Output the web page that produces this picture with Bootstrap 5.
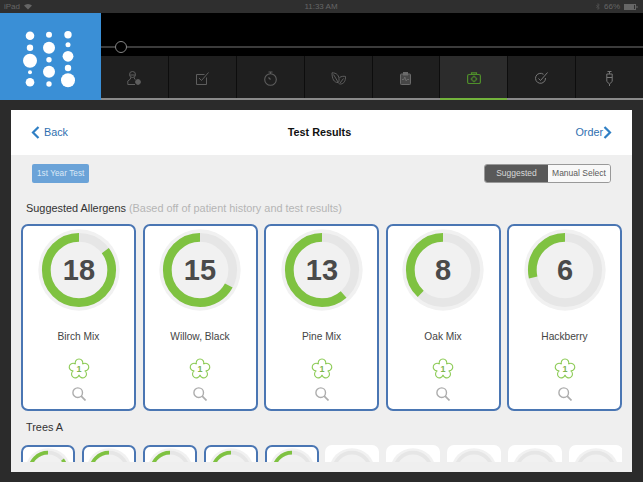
<!doctype html>
<html lang="en">
<head>
<meta charset="utf-8">
<title>Test Results</title>
<link href="https://cdn.jsdelivr.net/npm/bootstrap@5.3.0/dist/css/bootstrap.min.css" rel="stylesheet">
<style>
html,body{height:482px;overflow:hidden;background:#2b2b2b;font-family:"Liberation Sans",Arial,sans-serif}
.status-bar{height:13px;background:#2f2f2f;color:#666;font-size:8px;line-height:13px;padding:0 5px 0 4px}
.status-bar svg{display:block}
.status-side{flex:1}
.top-band{height:87px}
.logo-box{width:101px;background:#3a8fd6}
.logo-box svg{display:block}
.top-main{flex:1;background:#000}
.track-zone{height:43px;padding-top:33px}
.track-line{height:2px;background:#3b3b3b;position:relative}
.track-knob{position:absolute;left:14px;top:-5px;width:12px;height:12px;border-radius:50%;border:1.5px solid #858585;background:#000}
.tab-row{height:44px;background:#0d0d0d;border-bottom:2px solid #8a8a8a}
.tab-cell{flex:1;background:#1f1f1f;margin-left:1px;display:flex;align-items:center;justify-content:center;padding-top:2px}
.tab-cell:first-child{margin-left:0}
.tab-on{background:#2c2c2c;position:relative}
.tab-on::after{content:"";position:absolute;left:0;right:0;bottom:-2px;height:2px;background:#73b33c}
.outer-wrap{padding:10px 11px 0 11px;height:382px;background:#2b2b2b}
.sheet{height:362px;background:#efefef;overflow:hidden}
.sheet-head{height:45px;background:#fff;padding:0 20px}
.sheet-link{color:#2f6fb0;font-size:10.8px;text-decoration:none;width:60px}
.sheet-title{font-weight:700;font-size:10.8px;color:#111}
.sheet-body{padding:9px 10px 0 10px}
.year-pill{margin-left:11px;background:#6ba3d8;color:#dbe9f6;font-size:8.2px;border-radius:2px;height:19px;line-height:19px;padding:0 5px;width:57px;white-space:nowrap;letter-spacing:.05px}
.seg-group{margin-right:11px;height:19px;font-size:8.5px;border:1px solid #999;border-radius:3px;overflow:hidden;line-height:17px}
.seg-on{background:#595959;color:#d8d8d8;width:63px;text-align:center}
.seg-off{background:#f8f8f8;color:#5a5a5a;width:62px;text-align:center}
.section-label{font-size:10.9px;color:#333;margin:19px 0 0 5px;line-height:13px}
.section-label span{color:#b5b5b5}
.big-row{display:flex;gap:6.5px;margin-top:9px}
.big-card{width:115.4px;height:187px;background:#fff;border:2px solid #4a76b3;border-radius:7px;display:flex;flex-direction:column;align-items:center;padding-top:3px}
.big-card svg{display:block}
.gauge-num{font-size:29px;font-weight:700;fill:#4a4a4a;text-anchor:middle;font-family:"Liberation Sans",Arial,sans-serif}
.big-name{font-size:10.2px;color:#444;margin-top:19px;line-height:13px;height:13px}
.flower-wrap{margin-top:15px}
.lens-wrap{margin-top:7px}
.trees-label{font-size:10.9px;color:#333;margin:10px 0 0 5px;line-height:13px}
.mini-clip{height:17px;overflow:hidden;margin-top:11px}
.mini-row{display:flex;gap:6.9px}
.mini-card{width:54px;height:60px;background:#fff;border:2px solid #4a76b3;border-radius:7px;display:flex;justify-content:center;padding-top:1px;flex:none}
.mini-off{border-color:#fff}
</style>
</head>
<body>
<div class="status-bar d-flex justify-content-between align-items-center">
  <div class="status-side d-flex align-items-center gap-1">iPad
    <svg width="8" height="7" viewBox="0 0 9 7"><path d="M4.500 7 0 2.500a6.400 6.400 0 0 1 9 0z" fill="#666"/></svg>
  </div>
  <div>11:33 AM</div>
  <div class="status-side d-flex align-items-center justify-content-end gap-1">
    <svg width="4" height="7" viewBox="0 0 4 7" fill="none" stroke="#555" stroke-width=".7"><path d="M.3 2l3 3L2 6.500V.5L3.300 2l-3 3"/></svg>
    <span>66%</span>
    <svg width="14" height="6" viewBox="0 0 14 6"><rect x=".5" y=".5" width="11" height="5" fill="none" stroke="#666"/><rect x="1" y="1" width="9" height="4" fill="#666"/><rect x="12.500" y="2" width="1" height="2" fill="#666"/></svg>
  </div>
</div>
<div class="top-band d-flex">
  <div class="logo-box">
    <svg width="101" height="87" viewBox="0 13 101 87" fill="#fff">
      <circle cx="30" cy="35.7" r="4.3"/><circle cx="30" cy="47.7" r="3.2"/><circle cx="30" cy="60.7" r="7"/><circle cx="30" cy="72.3" r="2"/><circle cx="30" cy="82.3" r="4.3"/>
      <circle cx="49" cy="34.7" r="3"/><circle cx="49" cy="47.7" r="6"/><circle cx="49" cy="59.7" r="2.7"/><circle cx="49" cy="71.7" r="6"/><circle cx="49" cy="84" r="2.7"/>
      <circle cx="68" cy="34.7" r="3.7"/><circle cx="68" cy="44.7" r="2.5"/><circle cx="68" cy="56.3" r="5.4"/><circle cx="68" cy="68" r="3.2"/><circle cx="68" cy="80.3" r="7"/>
    </svg>
  </div>
  <div class="top-main">
    <div class="track-zone"><div class="track-line"><div class="track-knob"></div></div></div>
    <div class="tab-row d-flex">
      <div class="tab-cell"><svg width="14" height="14" viewBox="0 0 14 14" fill="none" stroke="#5e5e5e"><circle cx="5.500" cy="3.500" r="3"/><path d="M2.500 4h6M3.500 6.500v1.500L.8 10v3.500h7.200M7.500 6.500V8l1 .7"/><circle cx="11" cy="11" r="2.400" fill="#5e5e5e"/></svg></div>
      <div class="tab-cell"><svg width="13" height="13" viewBox="0 0 13 13" fill="none" stroke="#5e5e5e"><path d="M10.500 5.500v7h-10v-10h8"/><path d="M3 6l2.500 2.500L12.500.5"/></svg></div>
      <div class="tab-cell"><svg width="13" height="15" viewBox="0 0 13 15" fill="none" stroke="#5e5e5e" stroke-width="1.100"><circle cx="6.500" cy="8.500" r="5.800"/><path d="M4.500 1h4M6.500 1v2M6.500 8.500 4.500 6.500"/></svg></div>
      <div class="tab-cell"><svg width="15" height="13" viewBox="0 0 15 13" fill="none" stroke="#5e5e5e"><path d="M1 .8c4.500 0 7.500 2.500 7 8-.1.800-.4 1.400-.8 1.800C3 10.500 1 7 1 .8zM2.500 2.500 7 10"/><path d="M8.500 5.500c2-1.200 4.200-1.500 6-1 .2 4-1.500 7.500-5 7.500-.8 0-1.500-.3-2-.8M12.500 6.500l-3.500 4.500"/></svg></div>
      <div class="tab-cell"><svg width="11" height="13" viewBox="0 0 11 13" fill="#474747" stroke="#6a6a6a"><rect x=".5" y="2" width="10" height="10.500" rx=".8"/><rect x="3.500" y=".5" width="4" height="2.500" fill="#6a6a6a"/><path d="M2 7.500h1.800l1-2.500 1.400 4 1-1.500H9" fill="none"/></svg></div>
      <div class="tab-cell tab-on"><svg width="14" height="12" viewBox="0 0 14 12" fill="none" stroke="#4f8f2a" stroke-width="1.200"><rect x=".6" y="2.500" width="12.800" height="9" rx="1.500"/><path d="M4.500 2.500V.8h5v1.700"/><path d="M6 4.300h2v1.700h1.700v2H8v1.700H6V8H4.300V6H6z" stroke-width=".9"/></svg></div>
      <div class="tab-cell"><svg width="13" height="13" viewBox="0 0 13 13" fill="none" stroke="#777"><path d="M8.500 2.300A5 5 0 1 0 10.500 6"/><path d="M3.500 6.500l2 2L12.500.5"/></svg></div>
      <div class="tab-cell"><svg width="7" height="15" viewBox="0 0 7 15" fill="none" stroke="#777"><path d="M1.500.5h4M3.500.5v2.500M.8 3h5.400v7.500L3.500 13 .8 10.500zM3.500 13v2"/><path d="M.8 6.500h5.400"/></svg></div>
    </div>
  </div>
</div>
<div class="outer-wrap">
  <div class="sheet">
    <div class="sheet-head d-flex align-items-center justify-content-between">
      <a class="sheet-link d-flex align-items-center gap-1" href="#"><svg width="9" height="13" viewBox="0 0 9 13" fill="none" stroke="#2f7fc4" stroke-width="2.200"><path d="M7.500 1 2 6.500 7.500 12"/></svg>Back</a>
      <div class="sheet-title me-1">Test Results</div>
      <a class="sheet-link d-flex align-items-center justify-content-end" href="#">Order<svg width="9" height="13" viewBox="0 0 9 13" fill="none" stroke="#2f7fc4" stroke-width="2.200"><path d="M1.500 1 7 6.500 1.500 12"/></svg></a>
    </div>
    <div class="sheet-body">
      <div class="d-flex justify-content-between align-items-center">
        <div class="year-pill">1st Year Test</div>
        <div class="seg-group d-flex"><div class="seg-on">Suggested</div><div class="seg-off">Manual Select</div></div>
      </div>
      <p class="section-label">Suggested Allergens <span>(Based off of patient history and test results)</span></p>
      <div class="big-row" id="bigRow"></div>
      <p class="trees-label">Trees A</p>
      <div class="mini-clip"><div class="mini-row" id="miniRow"></div></div>
    </div>
  </div>
</div>
<script>
var C=2*Math.PI*32.7;
function gauge(size,val,frac,colored,sw){
  var on=colored?'<circle cx="41" cy="41" r="32.7" fill="none" stroke="#7fc241" stroke-width="'+sw+'" stroke-dasharray="'+(C*frac)+' '+C+'" transform="rotate(-90 41 41) scale(1 -1) translate(0 -82)"/>':'';
  return '<svg width="'+size+'" height="'+size+'" viewBox="0 0 82 82"><circle cx="41" cy="41" r="40.7" fill="#f1f1f1"/><circle cx="41" cy="41" r="32.7" fill="none" stroke="#e6e6e6" stroke-width="'+sw+'"/>'+on+(val?'<text class="gauge-num" x="41" y="51">'+val+'</text>':'')+'</svg>';
}
function flowerPath(){
  var d='',cx=11,cy=11,n=6,r=3.8;
  for(var k=0;k<5;k++){
    var a1=(-126+72*k)*Math.PI/180,a2=(-54+72*k)*Math.PI/180;
    var x1=(cx+n*Math.cos(a1)).toFixed(2),y1=(cy+n*Math.sin(a1)).toFixed(2),x2=(cx+n*Math.cos(a2)).toFixed(2),y2=(cy+n*Math.sin(a2)).toFixed(2);
    d+=(k==0?'M'+x1+' '+y1:'')+'A'+r+' '+r+' 0 1 1 '+x2+' '+y2;
  }
  return d+'z';
}
var flower='<svg width="22" height="22" viewBox="0 0 22 22"><path d="'+flowerPath()+'" fill="none" stroke="#8ccb55" stroke-width="1.100"/><text x="11" y="14" text-anchor="middle" font-size="9" font-weight="700" fill="#7fb552" font-family="Liberation Sans">1</text></svg>';
var lens='<svg width="14" height="14" viewBox="0 0 14 14" fill="none" stroke="#adadad" stroke-width="1.400"><circle cx="5.700" cy="5.700" r="4.800"/><path d="M9.200 9.200 13.500 13.500" stroke-width="1.700"/></svg>';
var big=[['18','Birch Mix',.85],['15','Willow, Black',.67],['13','Pine Mix',.614],['8','Oak Mix',.38],['6','Hackberry',.286]];
document.getElementById('bigRow').innerHTML=big.map(function(b){
  return '<div class="big-card">'+gauge(82,b[0],b[2],true,8.7)+'<div class="big-name">'+b[1]+'</div><div class="flower-wrap">'+flower+'</div><div class="lens-wrap">'+lens+'</div></div>';
}).join('');
var mini='';
for(var i=0;i<10;i++){mini+='<div class="mini-card'+(i>4?' mini-off':'')+'">'+gauge(46,'',i==0?.85:.3,i<5,6.5)+'</div>';}
document.getElementById('miniRow').innerHTML=mini;
</script>
<script src="https://cdn.jsdelivr.net/npm/bootstrap@5.3.0/dist/js/bootstrap.bundle.min.js"></script>
</body>
</html>
